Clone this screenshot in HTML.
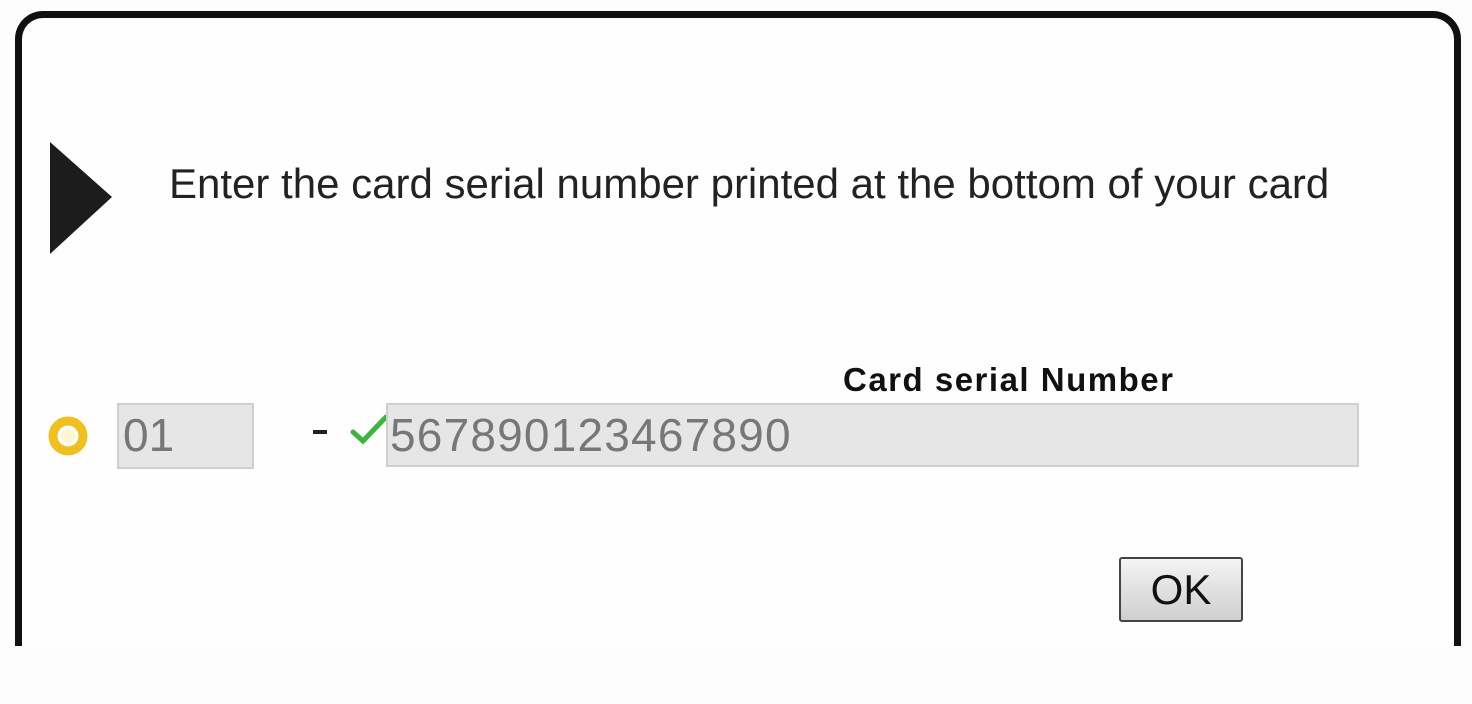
<!DOCTYPE html>
<html><head><style>
body{margin:0;width:1472px;height:704px;background:#fdfdfd;position:relative;overflow:hidden;font-family:"Liberation Sans",Arial,sans-serif}
.frame{position:absolute;left:15px;top:11px;width:1432px;height:628px;border:7px solid #111;border-bottom:none;border-radius:28px 28px 0 0;background:#fefefe}
.a{position:absolute}
.inp{position:absolute;background:#e6e6e6;border:2px solid #cfcfcf;box-sizing:border-box;color:#777;font-size:46px;line-height:60px;padding-left:4px}
</style></head><body>
<div class="frame"></div>
<svg class="a" style="left:48px;top:140px" width="66" height="116"><polygon points="2,2 64,57 2,114" fill="#1c1c1c"/></svg>
<div class="a" style="left:169px;top:160px;font-size:42px;color:#222;white-space:nowrap">Enter the card serial number printed at the bottom of your card</div>
<div class="a" style="left:843px;top:361px;font-size:33px;font-weight:bold;color:#111;white-space:nowrap;letter-spacing:1.5px">Card serial Number</div>
<svg class="a" style="left:48px;top:416px" width="42" height="42"><circle cx="20" cy="20" r="15" fill="none" stroke="#f0c020" stroke-width="9"/><circle cx="20" cy="20" r="7" fill="#fff6d0"/></svg>
<div class="inp" style="left:117px;top:403px;width:137px;height:66px">01</div>
<div class="a" style="left:313px;top:430px;width:14px;height:4px;background:#222"></div>
<svg class="a" style="left:350px;top:414px" width="38" height="32"><path d="M3 18 L13 27 L36 3" fill="none" stroke="#3db43d" stroke-width="5" stroke-linecap="round"/></svg>
<div class="inp" style="left:386px;top:403px;width:973px;height:64px;padding-left:2px;letter-spacing:1.2px">567890123467890</div>
<div class="a" style="left:1119px;top:557px;width:124px;height:65px;box-sizing:border-box;border:2px solid #444;border-radius:3px;background:linear-gradient(#f4f4f4,#cfcfcf);font-size:42px;color:#111;text-align:center;line-height:62px">OK</div>
</body></html>
